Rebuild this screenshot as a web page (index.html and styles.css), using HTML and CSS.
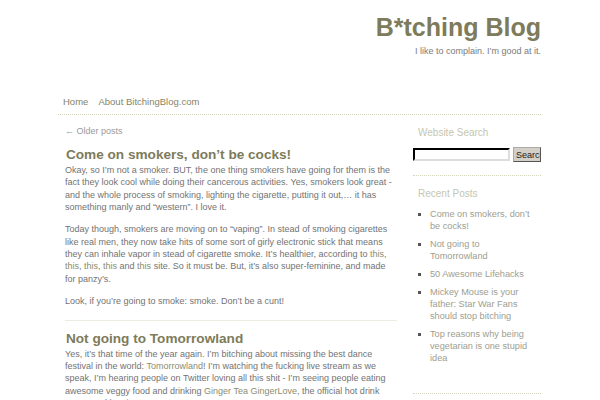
FILE: index.html
```html
<!DOCTYPE html>
<html>
<head>
<meta charset="utf-8">
<link rel="stylesheet" href="styles.css">
</head>
<body>
<div class="page">
  <header class="header">
    <h1 class="site-title">B*tching Blog</h1>
    <div class="tagline">I like to complain. I’m good at it.</div>
  </header>
  <nav class="nav">
    <a href="#">Home</a>
    <a href="#">About BitchingBlog.com</a>
  </nav>
  <div class="wrap">
    <main class="main">
      <div class="older"><a href="#">← Older posts</a></div>
      <article class="post">
        <h2 class="post-title">Come on smokers, don’t be cocks!</h2>
        <p>Okay, so I’m not a smoker. BUT, the one thing smokers have going for them is the fact they look cool while doing their cancerous activities. Yes, smokers look great - and the whole process of smoking, lighting the cigarette, putting it out,… it has something manly and “western”. I love it.</p>
        <p>Today though, smokers are moving on to “vaping”. In stead of smoking cigarettes like real men, they now take hits of some sort of girly electronic stick that means they can inhale vapor in stead of cigarette smoke. It’s healthier, according to <a href="#">this</a>, <a href="#">this</a>, <a href="#">this</a>, <a href="#">this</a> and <a href="#">this</a> site. So it must be. But, it’s also super-feminine, and made for panzy’s.</p>
        <p>Look, if you’re going to smoke: smoke. Don’t be a cunt!</p>
      </article>
      <article class="post">
        <h2 class="post-title">Not going to Tomorrowland</h2>
        <p>Yes, it’s that time of the year again. I’m bitching about missing the best dance festival in the world: <a href="#">Tomorrowland</a>! I’m watching the fucking live stream as we speak, I’m hearing people on Twitter loving all this shit - I’m seeing people eating awesome veggy food and drinking <a href="#">Ginger Tea GingerLove</a>, the official hot drink sponsored by Lipton Tea.</p>
      </article>
    </main>
    <aside class="sidebar">
      <section class="widget">
        <h3 class="widget-title">Website Search</h3>
        <form class="search">
          <input class="search-input" type="text">
          <button class="search-btn" type="button">Search</button>
        </form>
      </section>
      <section class="widget widget-recent">
        <h3 class="widget-title">Recent Posts</h3>
        <ul class="recent">
          <li><a href="#">Come on smokers, don’t be cocks!</a></li>
          <li><a href="#">Not going to Tomorrowland</a></li>
          <li><a href="#">50 Awesome Lifehacks</a></li>
          <li><a href="#">Mickey Mouse is your father: Star War Fans should stop bitching</a></li>
          <li><a href="#">Top reasons why being vegetarian is one stupid idea</a></li>
        </ul>
      </section>
    </aside>
  </div>
</div>
</body>
</html>
```
FILE: styles.css
```css
html, body {
  margin: 0;
  padding: 0;
  background: #fff;
}
body {
  font-family: "Liberation Sans", Arial, sans-serif;
  font-size: 9px;
  color: #737373;
  overflow: hidden;
  height: 400px;
}
a {
  color: #8c8c6c;
  text-decoration: none;
}
.page {
  width: 483px;
  margin-left: 58px;
}
.header {
  text-align: right;
  padding-top: 14px;
}
.site-title {
  margin: 0;
  font-size: 25px;
  line-height: 26px;
  font-weight: bold;
  color: #7d7b5a;
}
.tagline {
  margin-top: 6px;
  font-size: 9px;
  color: #7a7a7a;
}
.nav {
  margin-top: 40px;
  padding: 0 0 6px 5px;
  border-bottom: 1px dotted #d6d6bf;
  font-size: 9.5px;
  line-height: 12px;
}
.nav a {
  color: #858466;
  margin-right: 8px;
}
.wrap {
  display: flex;
  gap: 16px;
}
.main {
  width: 332px;
  padding-left: 7px;
}
.older {
  margin-top: 10px;
  line-height: 12px;
}
.older a {
  color: #9a9a9a;
}
.post {
  border-bottom: 1px solid #ececdf;
  padding-bottom: 3px;
  margin-bottom: 3px;
}
.post-title {
  margin: 9px 0 0 1px;
  font-size: 13.6px;
  line-height: 18px;
  color: #7d7b5a;
}
.post p {
  margin: 0 0 9.5px;
  line-height: 12.4px;
}
.sidebar {
  width: 128px;
}
.widget {
  border-bottom: 1px dotted #d6d6bf;
  padding: 11px 0 13px;
}
.widget-recent {
  padding-top: 11px;
  padding-bottom: 23px;
}
.widget-title {
  margin: 0 0 6px 5px;
  font-size: 10px;
  font-weight: normal;
  color: #c6c6b0;
  line-height: 14px;
}
.widget-recent .widget-title {
  margin-bottom: 7px;
}
.search {
  display: flex;
  align-items: center;
  gap: 3px;
  padding-top: 1px;
}
.search-input {
  width: 93px;
  height: 9px;
  margin: 0;
  padding: 0;
  border: 2px inset #555;
  border-right-color: #ddd;
  border-bottom-color: #ddd;
}
.search-btn {
  width: 28px;
  height: 15px;
  margin: 0;
  padding: 0 0 0 2px;
  overflow: hidden;
  white-space: nowrap;
  text-align: left;
  font-family: "Liberation Sans", Arial, sans-serif;
  font-size: 9px;
  color: #222;
  background: #d4d0c8;
  border: 1px outset #aaa;
}
.recent {
  margin: 0;
  padding: 0 10px 0 17px;
  list-style: square;
  color: #555;
}
.recent li {
  line-height: 12px;
  margin-bottom: 6px;
  font-size: 9.2px;
}
.recent a {
  color: #9e9e8e;
}
```
